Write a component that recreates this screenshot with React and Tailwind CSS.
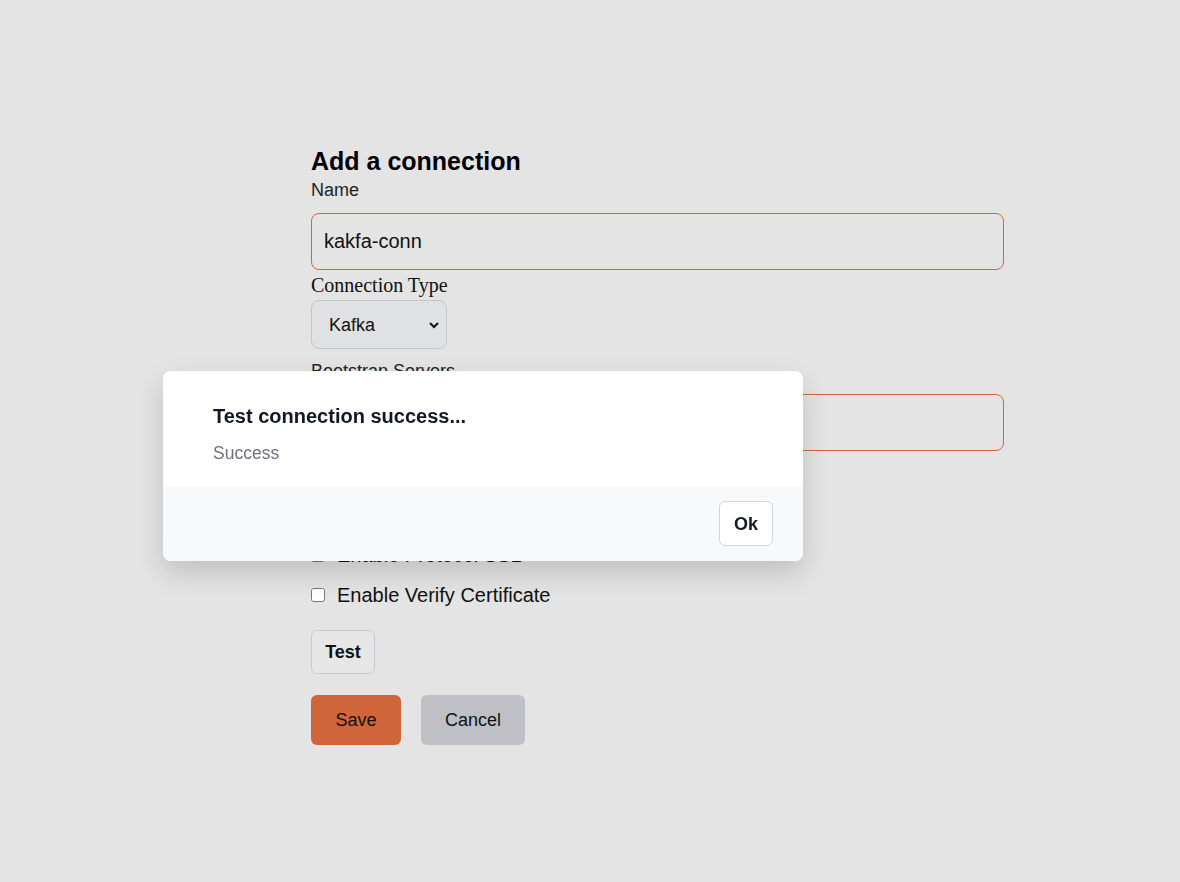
export default function App() {
    return (
        <div className="min-h-[882px] bg-[#e4e4e4] font-['Liberation_Sans',Arial,sans-serif] text-[#111]">
            <div className="pl-[311px] pt-[146px]">
                <form className="w-[693px] flex flex-col">
                    <h2 className="text-[25px] leading-[30px] font-bold text-black">Add a connection</h2>
                    <label className="text-lg leading-7 text-[#222]">Name</label>
                    <input
                        type="text"
                        defaultValue="kakfa-conn"
                        className="mt-[9px] h-[57px] w-full rounded-lg border border-[#d2663a] bg-transparent px-3 text-xl text-[#111] focus:outline-none"
                    />
                    <label className="font-['Liberation_Serif','Times_New_Roman',serif] text-xl leading-[30px] text-[#111]">Connection Type</label>
                    <div className="relative w-[136px]">
                        <select className="h-[49px] w-[136px] appearance-none rounded-lg border border-[#c3c5ca] bg-[#e0e1e2] pl-[17px] text-lg text-[#111] focus:outline-none">
                            <option>Kafka</option>
                        </select>
                        <svg className="pointer-events-none absolute right-[7px] top-[19px] h-3 w-3" viewBox="0 0 12 12" fill="none" stroke="#111" strokeWidth="2">
                            <path d="M2 4l4 4 4-4" />
                        </svg>
                    </div>
                    <label className="mt-[12px] text-lg leading-5 text-[#222]">Bootstrap Servers</label>
                    <input
                        type="text"
                        className="mt-[13px] h-[57px] w-full rounded-lg border border-[#d2663a] bg-transparent px-3 text-xl focus:outline-none"
                    />
                    <label className="mt-[90px] flex items-center text-xl leading-7">
                        <input type="checkbox" className="mr-3 h-[14px] w-[14px]" />
                        Enable Protocol SSL
                    </label>
                    <label className="mt-[12px] flex items-center text-xl leading-7">
                        <input type="checkbox" className="mr-3 h-[14px] w-[14px]" />
                        Enable Verify Certificate
                    </label>
                    <div className="mt-[21px]">
                        <button type="button" className="h-[44px] w-[64px] rounded-md border border-[#c7c9ce] bg-[#e6e6e7] text-lg font-bold text-[#111]">
                            Test
                        </button>
                    </div>
                    <div className="mt-[21px] flex gap-5">
                        <button type="button" className="h-[50px] w-[90px] rounded-md bg-[#d0653a] text-lg text-[#111]">
                            Save
                        </button>
                        <button type="button" className="h-[50px] w-[104px] rounded-md bg-[#bec0c6] text-lg text-[#111]">
                            Cancel
                        </button>
                    </div>
                </form>
            </div>

            <div className="fixed left-[163px] top-[371px] w-[640px] overflow-hidden rounded-lg bg-white shadow-[0_12px_28px_rgba(0,0,0,0.16)]">
                <div className="pl-[50px] pr-6 pt-[33px] pb-[22px]">
                    <h3 className="text-xl leading-6 font-bold text-[#111827]">Test connection success...</h3>
                    <p className="mt-[13px] text-[17.5px] leading-6 text-[#6b7280]">Success</p>
                </div>
                <div className="flex justify-end bg-[#f8f9fa] pr-[30px] pt-[14px] pb-[15px]">
                    <button type="button" className="h-[45px] w-[54px] rounded-md border border-[#d1d5db] bg-white text-lg font-bold text-[#111827]">
                        Ok
                    </button>
                </div>
            </div>
        </div>
    );
}
